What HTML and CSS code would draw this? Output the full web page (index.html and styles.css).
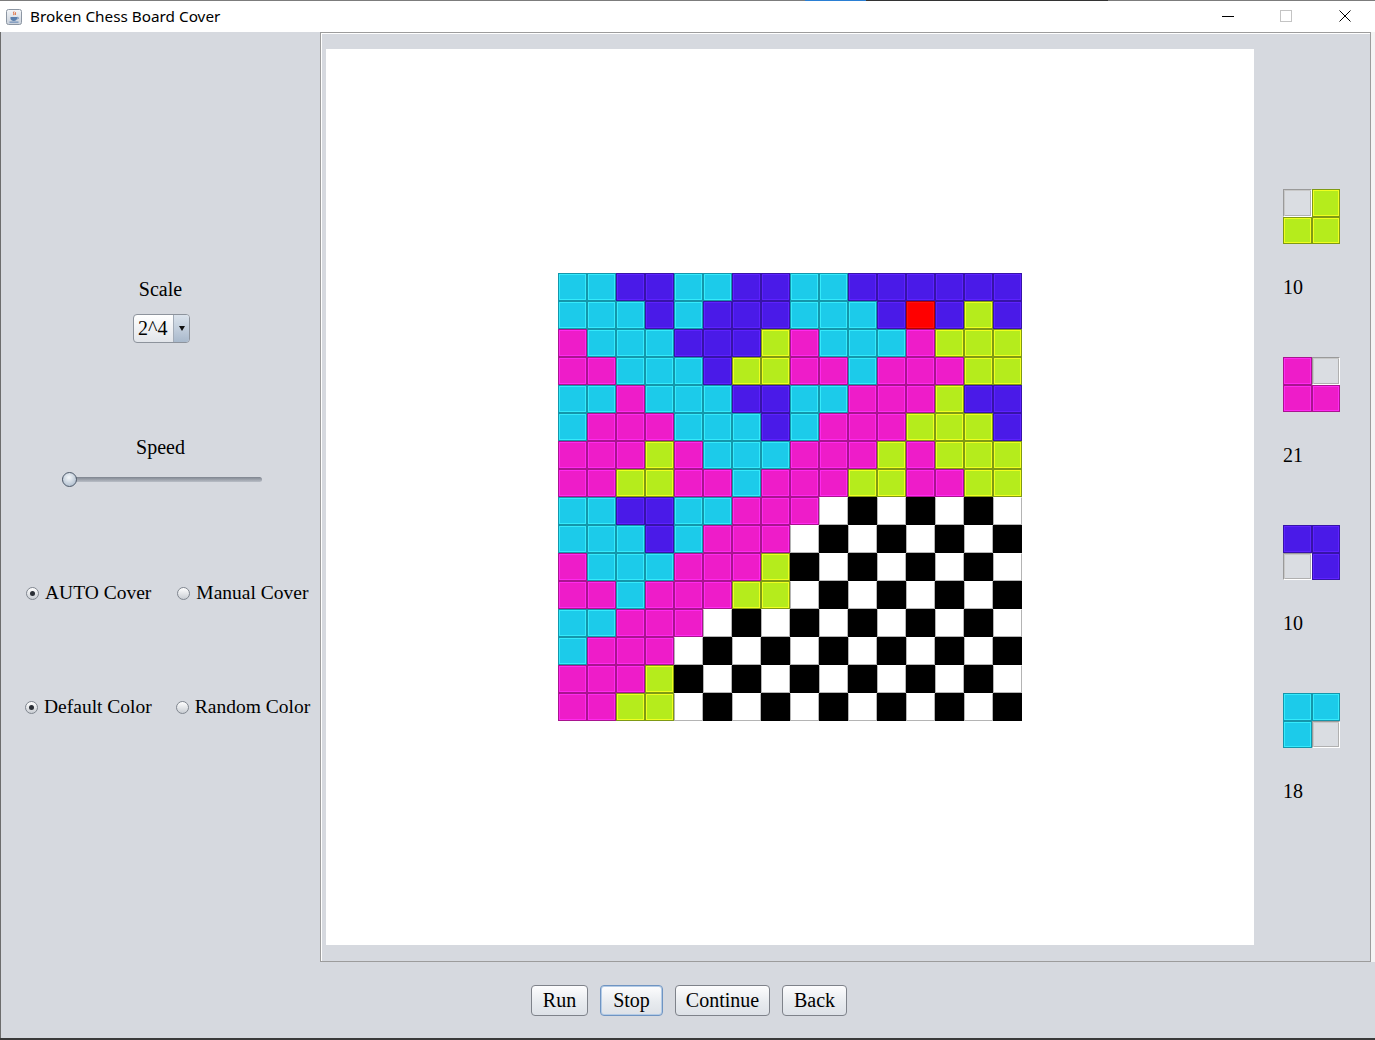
FILE: index.html
```html
<!DOCTYPE html>
<html lang="en">
<head>
<meta charset="utf-8">
<title>Broken Chess Board Cover</title>
<link rel="stylesheet" href="styles.css">
</head>
<body>
<div class="window">
  <div class="titlebar">
    <span class="app-icon">
      <svg width="16" height="16" viewBox="0 0 16 16">
        <defs><linearGradient id="ig" x1="0" y1="0" x2="0" y2="1"><stop offset="0" stop-color="#f4f6f9"/><stop offset="1" stop-color="#c9d0da"/></linearGradient></defs>
        <rect x="0.5" y="0.5" width="15" height="15" rx="2" fill="url(#ig)" stroke="#8c96a3"/>
        <path d="M8 2.5c-1.5 1.2 1 2 -0.4 3.6M9.6 3.2c-1 0.9 0.8 1.4 -0.3 2.6" stroke="#e0602a" stroke-width="1" fill="none"/>
        <path d="M4.5 8h6.5v1.6c0 1.4-1.4 2.3-3.2 2.3s-3.3-0.9-3.3-2.3z" fill="#5a7fae"/>
        <path d="M11 8.4h0.9c0.8 0 0.8 1.4 0 1.4H11" stroke="#5a7fae" stroke-width="0.8" fill="none"/>
        <rect x="3.5" y="12.6" width="9" height="1" fill="#5a7fae"/>
      </svg>
    </span>
    <span class="title">Broken Chess Board Cover</span>
    <div class="controls">
      <span class="ctl"><svg width="13" height="13" viewBox="0 0 13 13"><path d="M0 6.5h12" stroke="#000" stroke-width="1"/></svg></span>
      <span class="ctl"><svg width="13" height="13" viewBox="0 0 13 13"><rect x="0.5" y="0.5" width="11" height="11" fill="none" stroke="#c4c4c4"/></svg></span>
      <span class="ctl"><svg width="13" height="13" viewBox="0 0 13 13"><path d="M0.5 0.5l11 11M11.5 0.5l-11 11" stroke="#000" stroke-width="1"/></svg></span>
    </div>
  </div>

  <div class="main">
    <div class="left">
      <div class="label scale-label">Scale</div>
      <div class="combo">
        <span class="combo-text">2^4</span>
        <span class="combo-btn"><span class="tri"></span></span>
      </div>
      <div class="label speed-label">Speed</div>
      <div class="slider">
        <div class="track"></div>
        <div class="thumb"></div>
      </div>
      <div class="radio-row row1">
        <label class="radio"><span class="dot on"></span>AUTO Cover</label>
        <label class="radio"><span class="dot"></span>Manual Cover</label>
      </div>
      <div class="radio-row row2">
        <label class="radio"><span class="dot on"></span>Default Color</label>
        <label class="radio"><span class="dot"></span>Random Color</label>
      </div>
    </div>

    <div class="panel">
      <div class="canvas">
        <div class="board">
          <i class="c"></i><i class="c"></i><i class="p"></i><i class="p"></i><i class="c"></i><i class="c"></i><i class="p"></i><i class="p"></i><i class="c"></i><i class="c"></i><i class="p"></i><i class="p"></i><i class="p"></i><i class="p"></i><i class="p"></i><i class="p"></i>
          <i class="c"></i><i class="c"></i><i class="c"></i><i class="p"></i><i class="c"></i><i class="p"></i><i class="p"></i><i class="p"></i><i class="c"></i><i class="c"></i><i class="c"></i><i class="p"></i><i class="r"></i><i class="p"></i><i class="y"></i><i class="p"></i>
          <i class="m"></i><i class="c"></i><i class="c"></i><i class="c"></i><i class="p"></i><i class="p"></i><i class="p"></i><i class="y"></i><i class="m"></i><i class="c"></i><i class="c"></i><i class="c"></i><i class="m"></i><i class="y"></i><i class="y"></i><i class="y"></i>
          <i class="m"></i><i class="m"></i><i class="c"></i><i class="c"></i><i class="c"></i><i class="p"></i><i class="y"></i><i class="y"></i><i class="m"></i><i class="m"></i><i class="c"></i><i class="m"></i><i class="m"></i><i class="m"></i><i class="y"></i><i class="y"></i>
          <i class="c"></i><i class="c"></i><i class="m"></i><i class="c"></i><i class="c"></i><i class="c"></i><i class="p"></i><i class="p"></i><i class="c"></i><i class="c"></i><i class="m"></i><i class="m"></i><i class="m"></i><i class="y"></i><i class="p"></i><i class="p"></i>
          <i class="c"></i><i class="m"></i><i class="m"></i><i class="m"></i><i class="c"></i><i class="c"></i><i class="c"></i><i class="p"></i><i class="c"></i><i class="m"></i><i class="m"></i><i class="m"></i><i class="y"></i><i class="y"></i><i class="y"></i><i class="p"></i>
          <i class="m"></i><i class="m"></i><i class="m"></i><i class="y"></i><i class="m"></i><i class="c"></i><i class="c"></i><i class="c"></i><i class="m"></i><i class="m"></i><i class="m"></i><i class="y"></i><i class="m"></i><i class="y"></i><i class="y"></i><i class="y"></i>
          <i class="m"></i><i class="m"></i><i class="y"></i><i class="y"></i><i class="m"></i><i class="m"></i><i class="c"></i><i class="m"></i><i class="m"></i><i class="m"></i><i class="y"></i><i class="y"></i><i class="m"></i><i class="m"></i><i class="y"></i><i class="y"></i>
          <i class="c"></i><i class="c"></i><i class="p"></i><i class="p"></i><i class="c"></i><i class="c"></i><i class="m"></i><i class="m"></i><i class="m"></i><i class="w"></i><i class="k"></i><i class="w"></i><i class="k"></i><i class="w"></i><i class="k"></i><i class="w"></i>
          <i class="c"></i><i class="c"></i><i class="c"></i><i class="p"></i><i class="c"></i><i class="m"></i><i class="m"></i><i class="m"></i><i class="w"></i><i class="k"></i><i class="w"></i><i class="k"></i><i class="w"></i><i class="k"></i><i class="w"></i><i class="k"></i>
          <i class="m"></i><i class="c"></i><i class="c"></i><i class="c"></i><i class="m"></i><i class="m"></i><i class="m"></i><i class="y"></i><i class="k"></i><i class="w"></i><i class="k"></i><i class="w"></i><i class="k"></i><i class="w"></i><i class="k"></i><i class="w"></i>
          <i class="m"></i><i class="m"></i><i class="c"></i><i class="m"></i><i class="m"></i><i class="m"></i><i class="y"></i><i class="y"></i><i class="w"></i><i class="k"></i><i class="w"></i><i class="k"></i><i class="w"></i><i class="k"></i><i class="w"></i><i class="k"></i>
          <i class="c"></i><i class="c"></i><i class="m"></i><i class="m"></i><i class="m"></i><i class="w"></i><i class="k"></i><i class="w"></i><i class="k"></i><i class="w"></i><i class="k"></i><i class="w"></i><i class="k"></i><i class="w"></i><i class="k"></i><i class="w"></i>
          <i class="c"></i><i class="m"></i><i class="m"></i><i class="m"></i><i class="w"></i><i class="k"></i><i class="w"></i><i class="k"></i><i class="w"></i><i class="k"></i><i class="w"></i><i class="k"></i><i class="w"></i><i class="k"></i><i class="w"></i><i class="k"></i>
          <i class="m"></i><i class="m"></i><i class="m"></i><i class="y"></i><i class="k"></i><i class="w"></i><i class="k"></i><i class="w"></i><i class="k"></i><i class="w"></i><i class="k"></i><i class="w"></i><i class="k"></i><i class="w"></i><i class="k"></i><i class="w"></i>
          <i class="m"></i><i class="m"></i><i class="y"></i><i class="y"></i><i class="w"></i><i class="k"></i><i class="w"></i><i class="k"></i><i class="w"></i><i class="k"></i><i class="w"></i><i class="k"></i><i class="w"></i><i class="k"></i><i class="w"></i><i class="k"></i>
        </div>
      </div>
      <div class="legend">
        <div class="item">
          <div class="tile"><i class="e"></i><i class="y"></i><i class="y"></i><i class="y"></i></div>
          <div class="count">10</div>
        </div>
        <div class="item">
          <div class="tile"><i class="m"></i><i class="e"></i><i class="m"></i><i class="m"></i></div>
          <div class="count">21</div>
        </div>
        <div class="item">
          <div class="tile"><i class="p"></i><i class="p"></i><i class="e"></i><i class="p"></i></div>
          <div class="count">10</div>
        </div>
        <div class="item">
          <div class="tile"><i class="c"></i><i class="c"></i><i class="c"></i><i class="e"></i></div>
          <div class="count">18</div>
        </div>
      </div>
    </div>
    <div class="edge"></div>
  </div>

  <div class="bottom">
    <button class="btn b-run">Run</button>
    <button class="btn b-stop focus">Stop</button>
    <button class="btn b-cont">Continue</button>
    <button class="btn b-back">Back</button>
  </div>
</div>
</body>
</html>
```

FILE: styles.css
```css
* { box-sizing: border-box; }
html, body { margin: 0; padding: 0; }
body {
  width: 1375px;
  height: 1040px;
  overflow: hidden;
  background: #d6d9df;
  font-family: "Liberation Serif", "Times New Roman", serif;
  color: #000;
}
.window {
  width: 1375px;
  height: 1040px;
  display: flex;
  flex-direction: column;
  background: #d6d9df;
  border-bottom: 2px solid #3a3a3a;
}

/* title bar */
.titlebar {
  height: 32px;
  flex: none;
  background: #fff;
  border-top: 1px solid #7c7c7c;
  display: flex;
  align-items: center;
  position: relative;
}
.titlebar::before {
  content: "";
  position: absolute;
  top: -1px;
  left: 805px;
  width: 61px;
  height: 1px;
  background: #2a7fd4;
}
.titlebar::after {
  content: "";
  position: absolute;
  top: -1px;
  left: 866px;
  width: 242px;
  height: 1px;
  background: #333;
}
.app-icon {
  display: flex;
  margin-left: 6px;
  width: 16px;
  height: 16px;
}
.title {
  margin-left: 8px;
  font-family: "Noto Sans", "Open Sans", sans-serif;
  font-size: 15.3px;
  color: #000;
  margin-top: -1px;
}
.controls {
  margin-left: auto;
  display: flex;
  height: 31px;
}
.ctl {
  width: 58px;
  height: 31px;
  display: flex;
  align-items: center;
  justify-content: center;
}
.ctl:last-child { width: 60px; }

/* main area */
.main {
  height: 930px;
  flex: none;
  display: flex;
}
.left {
  width: 320px;
  flex: none;
  display: flex;
  flex-direction: column;
  align-items: center;
  border-left: 1px solid #6d6d6d;
}
.label {
  font-size: 20px;
  line-height: 24px;
  height: 24px;
}
.scale-label { margin-top: 245px; }
.combo {
  margin-top: 13px;
  width: 57px;
  height: 29px;
  display: flex;
  border: 1px solid #8d939c;
  border-radius: 4px;
  background: linear-gradient(#ffffff, #e2e5ea);
  overflow: hidden;
  margin-left: 2px;
}
.combo-text {
  flex: 1;
  font-size: 20px;
  line-height: 27px;
  padding-left: 4px;
}
.combo-btn {
  width: 16px;
  border-left: 1px solid #a3acb8;
  background: linear-gradient(#dbe3ec, #a9b9cc);
  display: flex;
  align-items: center;
  justify-content: center;
}
.tri {
  width: 0;
  height: 0;
  border-left: 3.5px solid transparent;
  border-right: 3.5px solid transparent;
  border-top: 5px solid #111;
}
.speed-label { margin-top: 92px; }
.slider {
  margin-top: 10px;
  width: 200px;
  height: 20px;
  position: relative;
  margin-left: 2px;
}
.track {
  position: absolute;
  left: 0;
  right: 0;
  top: 8px;
  height: 5px;
  border-radius: 3px;
  background: linear-gradient(#7e848f, #b9bec6);
}
.thumb {
  position: absolute;
  left: 0;
  top: 3px;
  width: 15px;
  height: 15px;
  border-radius: 50%;
  border: 1px solid #4e5a6a;
  background: radial-gradient(circle at 45% 35%, #f4f7fa, #b9c6d4 70%, #9eafc2);
}
.radio-row {
  align-self: stretch;
  display: flex;
  height: 24px;
  font-size: 19.5px;
  line-height: 24px;
}
.row1 { margin-top: 92px; padding-left: 25px; gap: 26px; }
.row2 { margin-top: 90px; padding-left: 24px; gap: 24px; }
.radio {
  display: flex;
  align-items: center;
  white-space: nowrap;
}
.dot {
  width: 13px;
  height: 13px;
  border-radius: 50%;
  border: 1px solid #80868f;
  background: linear-gradient(#ffffff, #c9cdd3);
  margin-right: 6px;
  position: relative;
  flex: none;
}
.dot.on::after {
  content: "";
  position: absolute;
  left: 3px;
  top: 3px;
  width: 5px;
  height: 5px;
  border-radius: 50%;
  background: #2b2f36;
}

/* center panel */
.panel {
  width: 1051px;
  flex: none;
  border: 1px solid #9c9c9c;
  box-shadow: inset 1px 1px 0 #ffffff;
  display: flex;
  padding: 16px 0 16px 5px;
}
.canvas {
  width: 928px;
  height: 896px;
  background: #fff;
  display: flex;
  align-items: center;
  justify-content: center;
  flex: none;
}
.board {
  display: grid;
  grid-template-columns: repeat(16, 29px);
  grid-template-rows: repeat(16, 28px);
}
.board i, .tile i {
  display: block;
  border: 1px solid;
}
.c { background: #1ccbea; border-color: #1496ab !important; box-shadow: inset 0 0 0 1px #35eafc; }
.p { background: #4a1ae8; border-color: #3614a8 !important; box-shadow: inset 0 0 0 1px #5e22ff; }
.m { background: #ee1cc9; border-color: #a9148f !important; box-shadow: inset 0 0 0 1px #ff2af0; }
.y { background: #b5ec1c; border-color: #7f9a14 !important; box-shadow: inset 0 0 0 1px #f0ff20; }
.r { background: #ff0000; border-color: #b40000 !important; box-shadow: inset 0 0 0 1px #ff1010; }
.w { background: #fff; border-color: #fff #b4b4b4 #b4b4b4 #b4b4b4 !important; }
.k { background: #000; border-color: #000 !important; }
.e {
  background: #dadde2;
  border-color: #9a9a9a #ffffff #ffffff #9a9a9a !important;
  box-shadow: inset 1px 1px 0 #c8c8c8, inset -1px -1px 0 #b0b0b0;
}

/* legend */
.legend {
  width: 116px;
  flex: none;
  display: flex;
  flex-direction: column;
  gap: 59px;
  padding-top: 140px;
  padding-left: 29px;
}
.tile {
  display: grid;
  grid-template-columns: 28.5px 28.5px;
  grid-template-rows: 27.5px 27.5px;
  width: 57px;
}
.count {
  margin-top: 32px;
  height: 22px;
  font-size: 20px;
  line-height: 22px;
}
.edge {
  flex: 1;
  background: #f4f4f4;
}

/* bottom buttons */
.bottom {
  flex: 1;
  display: flex;
  justify-content: center;
  align-items: center;
  gap: 12px;
  padding-left: 2px;
  border-left: 1px solid #6d6d6d;
}
.btn {
  height: 31px;
  font-family: "Liberation Serif", "Times New Roman", serif;
  font-size: 20px;
  color: #000;
  padding: 0;
  border: 1px solid #7e828a;
  border-radius: 4px;
  background: linear-gradient(#fdfdfe, #e8ebef 55%, #dde1e7);
  text-align: center;
  line-height: 28px;
}
.b-run { width: 57px; }
.b-stop { width: 63px; }
.b-cont { width: 95px; }
.b-back { width: 65px; }
.btn.focus {
  border-color: #6f94c2;
  box-shadow: inset 0 0 0 1px #b3cbe6;
}
```
